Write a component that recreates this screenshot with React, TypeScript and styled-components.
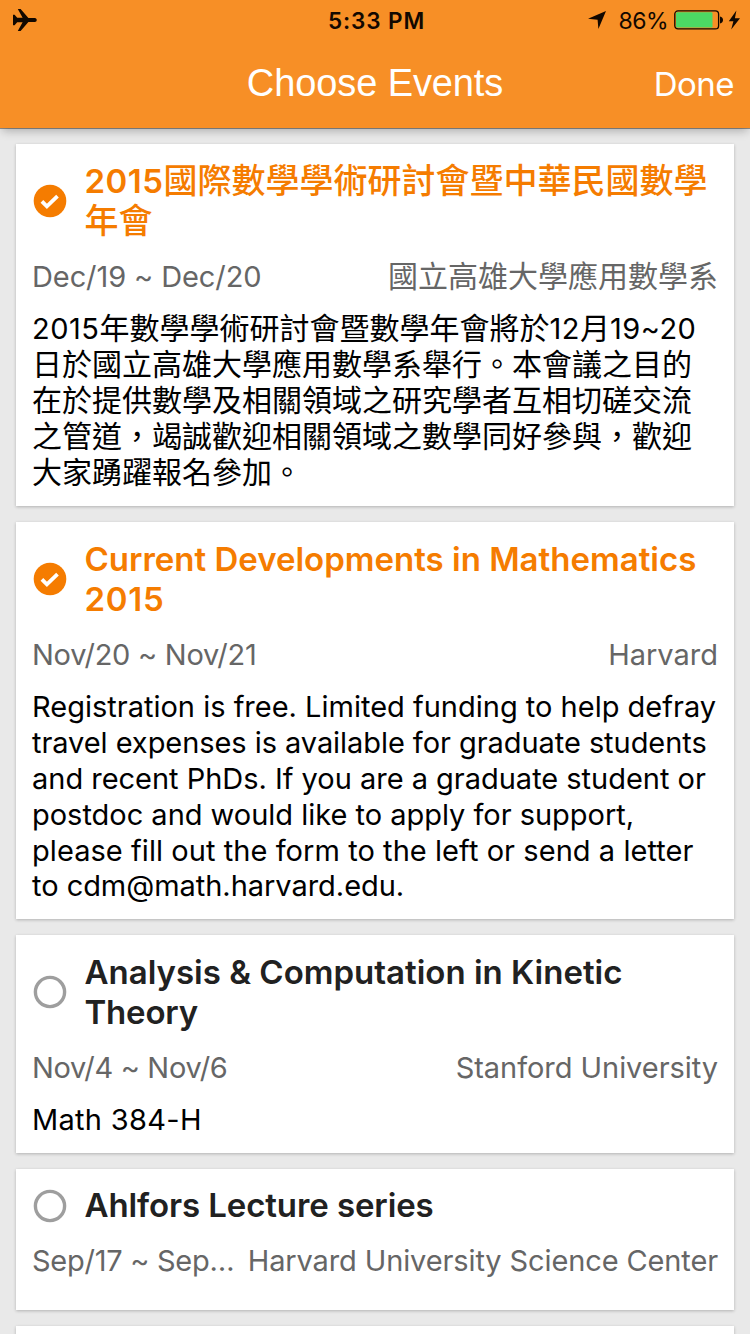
import React from 'react';
import styled, { createGlobalStyle } from 'styled-components';

const GlobalStyle = createGlobalStyle`
  * { box-sizing: border-box; }
  html, body { margin: 0; height: 100%; overflow: hidden; }
  body {
    background: #e9e9e9;
    font-family: Inter, "Noto Sans CJK TC", sans-serif;
    -webkit-font-smoothing: antialiased;
  }
`;

const Screen = styled.div`
  display: flex;
  flex-direction: column;
  width: 750px;
  height: 1334px;
  overflow: hidden;
  background: #e9e9e9;
`;

const Header = styled.header`
  flex: none;
  height: 128px;
  background: #f78f26;
  box-shadow: 0 1px 0 rgba(0, 0, 0, 0.38), 0 5px 9px -2px rgba(0, 0, 0, 0.26);
`;

const StatusBar = styled.div`
  display: grid;
  grid-template-columns: 1fr auto 1fr;
  align-items: center;
  height: 40px;
  padding: 0 9px 0 12px;
  color: #120800;
`;

const Clock = styled.span`
  margin-top: 1px;
  font-size: 22.5px;
  font-weight: 600;
  letter-spacing: 0.9px;
`;

const StatusRight = styled.div`
  display: flex;
  align-items: center;
  justify-content: flex-end;
`;

const Percent = styled.span`
  margin: 1px 6px 0 11px;
  font-size: 23px;
  letter-spacing: -0.5px;
`;

const NavBar = styled.div`
  display: grid;
  grid-template-columns: 1fr auto 1fr;
  align-items: center;
  height: 88px;
  padding: 0 16px;
  color: #fff;
`;

const NavTitle = styled.h1`
  grid-column: 2;
  margin: 0 0 2px;
  font: 400 38px/44px "Liberation Sans", sans-serif;
  letter-spacing: -0.1px;
`;

const DoneButton = styled.button`
  justify-self: end;
  padding: 0;
  border: 0;
  background: none;
  color: inherit;
  font: 400 33px/40px Inter, sans-serif;
  letter-spacing: -0.5px;
`;

const List = styled.main`
  display: flex;
  flex-direction: column;
  gap: 16px;
  padding: 16px;
`;

const Mark = styled.svg`
  flex: none;
  width: 34px;
  height: 34px;
  margin-left: 1px;
`;

const Card = styled.article<{ $compact?: boolean }>`
  flex: none;
  padding: ${(p) => (p.$compact ? '16px 16px 15px' : '17px 16px 16px')};
  background: #fff;
  box-shadow: 0 1px 3px rgba(0, 0, 0, 0.24);

  ${Mark} {
    margin-top: ${(p) => (p.$compact ? 2 : 0)}px;
  }
`;

const CardHead = styled.div`
  display: flex;
  align-items: center;
  gap: 17.5px;
`;

const Title = styled.h2<{ $on?: boolean }>`
  margin: 0;
  font-size: 33px;
  font-weight: 600;
  line-height: 40px;
  color: ${(p) => (p.$on ? '#f57c00' : '#212121')};
`;

const Meta = styled.div`
  display: flex;
  justify-content: space-between;
  gap: 10px;
  height: 36px;
  margin: 18px 0 16px;
  font-size: 29px;
  line-height: 36px;
  color: #666;
`;

const Dates = styled.span<{ $track?: number }>`
  min-width: 0;
  overflow: hidden;
  text-overflow: ellipsis;
  white-space: nowrap;
  letter-spacing: ${(p) => p.$track ?? 0}px;
`;

const Place = styled.span<{ $track?: number }>`
  flex: none;
  letter-spacing: ${(p) => p.$track ?? 0}px;
`;

const Body = styled.p<{ $height: number }>`
  height: ${(p) => p.$height}px;
  margin: 0;
  font-size: 29px;
  line-height: 35.9px;
  color: #000;
`;

const Line = styled.span<{ $track?: number }>`
  display: block;
  height: 1lh;
  white-space: nowrap;
  letter-spacing: ${(p) => p.$track ?? 0}px;
`;

const Han = styled.span<{ $size: number; $weight?: number }>`
  font-family: "Noto Sans CJK TC", sans-serif;
  font-size: ${(p) => p.$size}px;
  font-weight: ${(p) => p.$weight ?? 400};
  line-height: 1;
  letter-spacing: 0;
`;

const Check = ({ on }: { on?: boolean }) => (
  <Mark viewBox="0 0 34 34">
    {on ? (
      <>
        <circle cx="17" cy="17" r="16.3" fill="#f57c00" />
        <path d="M8.9 17.3l5 5 10.6-10.2" fill="none" stroke="#fff" strokeWidth="3.8" />
      </>
    ) : (
      <circle cx="17" cy="17" r="14.6" fill="none" stroke="#9e9e9e" strokeWidth="3.4" />
    )}
  </Mark>
);

const Plane = () => (
  <svg width="26" height="24" viewBox="0 0 26 24" fill="currentColor">
    <path d="M1 6.8h1.6l2.6 3h5.4L5.8 1h2.8l7.8 9h6.4c2.6 0 2.6 4 0 4h-6.4l-7.8 9H5.8l4.8-8.8H5.2l-2.6 3H1z" />
  </svg>
);

const Arrow = () => (
  <svg width="20" height="20" viewBox="0 0 20 20" fill="currentColor">
    <path d="M19 1L11.4 19l-.8-9.2L1 8.8z" />
  </svg>
);

const Battery = () => (
  <svg width="50" height="20" viewBox="0 0 50 20">
    <rect x=".8" y=".9" width="43.8" height="18" rx="3.2" fill="none" stroke="currentColor" strokeWidth="1.3" />
    <rect x="2" y="2.2" width="36.5" height="15.4" rx="1.4" fill="#4cd964" />
    <path d="M46 6.4c4 .6 4 6.4 0 7z" fill="currentColor" />
  </svg>
);

const BoltIcon = styled.svg`
  margin-left: 4px;
`;

const Bolt = () => (
  <BoltIcon width="13" height="20" viewBox="0 0 13 20" fill="currentColor">
    <path d="M8.4.5L.8 11.2h4.6L3.2 19.4 12 8.2H6.9z" />
  </BoltIcon>
);

export default function App() {
  return (
    <Screen>
      <GlobalStyle />
      <Header>
        <StatusBar>
          <Plane />
          <Clock>5:33 PM</Clock>
          <StatusRight>
            <Arrow />
            <Percent>86%</Percent>
            <Battery />
            <Bolt />
          </StatusRight>
        </StatusBar>
        <NavBar>
          <NavTitle>Choose Events</NavTitle>
          <DoneButton>Done</DoneButton>
        </NavBar>
      </Header>
      <List>
        <Card lang="zh-Hant">
          <CardHead>
            <Check on />
            <Title $on>
              <Line $track={0.5}>2015<Han $size={34} $weight={500}>國際數學學術研討會暨中華民國數學</Han></Line>
              <Line><Han $size={34} $weight={500}>年會</Han></Line>
            </Title>
          </CardHead>
          <Meta>
            <Dates $track={-0.1}>Dec/19 ~ Dec/20</Dates>
            <Place><Han $size={30}>國立高雄大學應用數學系</Han></Place>
          </Meta>
          <Body $height={179}>
            <Line $track={0.5}>2015<Han $size={30}>年數學學術研討會暨數學年會將於</Han>12<Han $size={30}>月</Han>19~20</Line>
            <Line><Han $size={30}>日於國立高雄大學應用數學系舉行。本會議之目的</Han></Line>
            <Line><Han $size={30}>在於提供數學及相關領域之研究學者互相切磋交流</Han></Line>
            <Line><Han $size={30}>之管道，竭誠歡迎相關領域之數學同好參與，歡迎</Han></Line>
            <Line><Han $size={30}>大家踴躍報名參加。</Han></Line>
          </Body>
        </Card>
        <Card>
          <CardHead>
            <Check on />
            <Title $on>
              <Line>Current Developments in Mathematics</Line>
              <Line $track={0.7}>2015</Line>
            </Title>
          </CardHead>
          <Meta>
            <Dates $track={-0.27}>Nov/20 ~ Nov/21</Dates>
            <Place>Harvard</Place>
          </Meta>
          <Body $height={214}>
            <Line>Registration is free. Limited funding to help defray</Line>
            <Line $track={-0.06}>travel expenses is available for graduate students</Line>
            <Line $track={-0.02}>and recent PhDs. If you are a graduate student or</Line>
            <Line $track={-0.02}>postdoc and would like to apply for support,</Line>
            <Line $track={0.06}>please fill out the form to the left or send a letter</Line>
            <Line $track={-0.04}>to cdm@math.harvard.edu.</Line>
          </Body>
        </Card>
        <Card>
          <CardHead>
            <Check />
            <Title>
              <Line>Analysis &amp; Computation in Kinetic</Line>
              <Line $track={-0.2}>Theory</Line>
            </Title>
          </CardHead>
          <Meta>
            <Dates $track={-0.33}>Nov/4 ~ Nov/6</Dates>
            <Place $track={-0.05}>Stanford University</Place>
          </Meta>
          <Body $height={35}>
            <Line $track={0.3}>Math 384-H</Line>
          </Body>
        </Card>
        <Card $compact>
          <CardHead>
            <Check />
            <Title>
              <Line $track={-0.1}>Ahlfors Lecture series</Line>
            </Title>
          </CardHead>
          <Meta>
            <Dates $track={-0.27}>Sep/17 ~ Sep/18</Dates>
            <Place $track={-0.12}>Harvard University Science Center</Place>
          </Meta>
        </Card>
        <Card>
          <CardHead>
            <Check />
          </CardHead>
        </Card>
      </List>
    </Screen>
  );
}
